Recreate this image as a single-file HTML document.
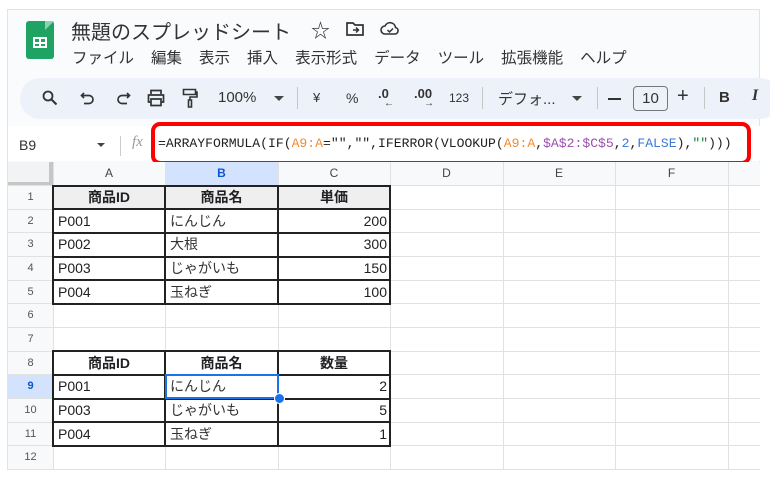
<!DOCTYPE html><html><head><meta charset="utf-8"><style>
body{margin:0;width:770px;height:482px;background:#fff;position:relative;overflow:hidden;font-family:"Liberation Sans","Noto Sans CJK JP",sans-serif;color:#202124}
.a{position:absolute}
.app{left:7px;top:9px;width:753px;height:461px;background:#f9fbfd;border:1px solid #e3e3e3;box-sizing:border-box;overflow:hidden}
.cell{position:absolute;font-size:14px;line-height:23px;white-space:nowrap;overflow:hidden}
.mono{font-family:"Liberation Mono","DejaVu Sans Mono",monospace}
.menu span{margin-right:17px}
</style></head><body>
<div class="a app"></div>
<div class="a" style="left:26px;top:21px;width:28px;height:38px;background:#1ea362;border-radius:3px"></div>
<div class="a" style="left:45px;top:21px;width:0;height:0;border-left:9px solid #8ed1b1;border-bottom:9px solid transparent"></div>
<div class="a" style="left:33px;top:37px;width:14px;height:11px;border:2px solid #fff;box-sizing:border-box"></div>
<div class="a" style="left:33px;top:41.5px;width:14px;height:2px;background:#fff"></div>
<div class="a" style="left:39px;top:37px;width:2px;height:11px;background:#fff"></div>
<div class="a" style="left:71px;top:16px;font-size:20px;color:#333">無題のスプレッドシート</div>
<div class="a" style="left:311px;top:16px;font-size:19px;color:#333">☆</div>
<svg class="a" style="left:346px;top:21px" width="18" height="15" viewBox="0 0 18 15"><path d="M1 2h6l2 2h8v10H1z" fill="none" stroke="#333" stroke-width="1.7"/><path d="M7 9h5M10 6.5l2.5 2.5-2.5 2.5" fill="none" stroke="#333" stroke-width="1.5"/></svg>
<svg class="a" style="left:380px;top:21px" width="20" height="15" viewBox="0 0 20 15"><path d="M5 13a4 4 0 0 1 0-8 5.5 5.5 0 0 1 10.5 1.5A3.3 3.3 0 0 1 15 13z" fill="none" stroke="#333" stroke-width="1.6"/><path d="M7.5 9l2 2 3.5-3.5" fill="none" stroke="#333" stroke-width="1.5"/></svg>
<div class="a menu" style="left:72px;top:46px;font-size:15.5px;color:#333;white-space:nowrap"><span>ファイル</span><span>編集</span><span>表示</span><span>挿入</span><span>表示形式</span><span>データ</span><span>ツール</span><span>拡張機能</span><span>ヘルプ</span></div>
<div class="a" style="left:20px;top:78px;width:760px;height:41px;background:#edf2fa;border-radius:20px"></div>
<svg class="a" style="left:42px;top:90px" width="16" height="16" viewBox="0 0 16 16"><circle cx="6" cy="6" r="4.5" fill="none" stroke="#333" stroke-width="1.8"/><path d="M9.5 9.5l5 5" stroke="#333" stroke-width="2"/></svg>
<svg class="a" style="left:80px;top:91px" width="16" height="15" viewBox="0 0 16 15"><path d="M4 2L1.5 4.5 4 7M2 4.5h7a4 4 0 0 1 0 8H4" fill="none" stroke="#333" stroke-width="1.7"/></svg>
<svg class="a" style="left:115px;top:91px" width="16" height="15" viewBox="0 0 16 15"><path d="M12 2l2.5 2.5L12 7M14 4.5H7a4 4 0 0 0 0 8h5" fill="none" stroke="#333" stroke-width="1.7"/></svg>
<svg class="a" style="left:147px;top:89px" width="18" height="18" viewBox="0 0 18 18"><path d="M4 5V1.5h10V5M4 13H1.5V6h15v7H14M4 10h10v6.5H4z" fill="none" stroke="#333" stroke-width="1.7"/></svg>
<svg class="a" style="left:182px;top:88px" width="16" height="20" viewBox="0 0 16 20"><path d="M1.5 1.5h12v5h-12zM13.5 4h1.5v5H8v3M6.5 12h3v7h-3z" fill="none" stroke="#333" stroke-width="1.6"/></svg>
<div class="a" style="left:218px;top:89px;font-size:15px;color:#333">100%</div>
<div class="a" style="left:274px;top:96px;border:5px solid transparent;border-top-color:#444"></div>
<div class="a" style="left:297px;top:87px;width:1px;height:22px;background:#c7c7c7"></div>
<div class="a" style="left:313px;top:90px;font-size:13px;color:#333">¥</div>
<div class="a" style="left:346px;top:90px;font-size:14px;color:#333">%</div>
<div class="a" style="left:378px;top:86px;font-size:13px;color:#333;font-weight:bold">.0</div>
<div class="a" style="left:384px;top:98px;font-size:10px;color:#333">←</div>
<div class="a" style="left:414px;top:86px;font-size:13px;color:#333;font-weight:bold">.00</div>
<div class="a" style="left:424px;top:98px;font-size:10px;color:#333">→</div>
<div class="a" style="left:449px;top:91px;font-size:12px;color:#333">123</div>
<div class="a" style="left:482px;top:87px;width:1px;height:22px;background:#c7c7c7"></div>
<div class="a" style="left:498px;top:88px;font-size:15px;color:#333">デフォ...</div>
<div class="a" style="left:572px;top:96px;border:5px solid transparent;border-top-color:#444"></div>
<div class="a" style="left:597px;top:87px;width:1px;height:22px;background:#c7c7c7"></div>
<div class="a" style="left:608px;top:98px;width:13px;height:2px;background:#333"></div>
<div class="a" style="left:633px;top:86px;width:35px;height:25px;border:1px solid #777;border-radius:4px;box-sizing:border-box;font-size:15px;text-align:center;line-height:23px;color:#333">10</div>
<div class="a" style="left:677px;top:85px;font-size:20px;color:#333">+</div>
<div class="a" style="left:704px;top:87px;width:1px;height:22px;background:#c7c7c7"></div>
<div class="a" style="left:719px;top:89px;font-size:15px;font-weight:bold;color:#333">B</div>
<div class="a" style="left:752px;top:87px;font-size:16px;font-style:italic;font-weight:bold;color:#333;font-family:'Liberation Serif',serif">I</div>
<div class="a" style="left:8px;top:126px;width:752px;height:35px;background:#fff"></div>
<div class="a" style="left:19px;top:137px;font-size:14px;color:#333">B9</div>
<div class="a" style="left:97px;top:143px;border:4.5px solid transparent;border-top-color:#444"></div>
<div class="a" style="left:120px;top:136px;width:1px;height:20px;background:#ccc"></div>
<div class="a" style="left:132px;top:134px;font-size:15px;font-style:italic;color:#999;font-family:'Liberation Serif',serif">fx</div>
<div class="a" style="left:151px;top:122px;width:600px;height:43px;border:4px solid #ff0000;border-radius:9px;box-sizing:border-box"></div>
<div class="a mono" style="left:158px;top:136px;font-size:13.1px;color:#202124;white-space:nowrap;letter-spacing:0">=ARRAYFORMULA(IF(<span style="color:#f28b30">A9:A</span>="","",IFERROR(VLOOKUP(<span style="color:#f28b30">A9:A</span>,<span style="color:#9a4fb0">$A$2:$C$5</span>,<span style="color:#3a77d8">2</span>,<span style="color:#3a77d8">FALSE</span>),<span style="color:#188038">""</span>)))</div>
<div class="a" id="g" style="left:8px;top:162px;width:752px;height:308px;background:#fff;overflow:hidden"></div>
<script>
var g=document.getElementById('g');
var cols=[0,45,157,270,382,495,607,720,760];
var rt=function(r){return 24+(r-1)*23.67};
var h='';
h+='<div class="a" style="left:0;top:0;width:752px;height:24px;background:#f8f9fa"></div>';
h+='<div class="a" style="left:0;top:0;width:45px;height:308px;background:#f8f9fa"></div>';
h+='<div class="a" style="left:157px;top:0;width:113px;height:24px;background:#d3e3fd"></div>';
h+='<div class="a" style="left:0;top:'+rt(9)+'px;width:45px;height:23.67px;background:#d3e3fd"></div>';
h+='<div class="a" style="left:0;top:0;width:45px;height:24px;background:#f1f3f4;border-right:4px solid #c4c7c5;border-bottom:4px solid #c4c7c5;box-sizing:border-box"></div>';
for(var i=1;i<cols.length-1;i++)h+='<div class="a" style="left:'+cols[i]+'px;top:0;width:1px;height:308px;background:#e1e1e1"></div>';
for(var r=1;r<=13;r++)h+='<div class="a" style="left:0;top:'+(rt(r)-1)+'px;width:752px;height:1px;background:#e1e1e1"></div>';
var L=['A','B','C','D','E','F'];
for(var i=0;i<6;i++)h+='<div class="cell" style="left:'+cols[i+1]+'px;top:0;width:'+(cols[i+2]-cols[i+1])+'px;text-align:center;font-size:12px;color:#444;'+(i==1?'font-weight:bold;color:#0b57d0':'')+'">'+L[i]+'</div>';
for(var r=1;r<=12;r++)h+='<div class="cell" style="left:0;top:'+rt(r)+'px;width:45px;text-align:center;font-size:11px;color:#555;'+(r==9?'font-weight:bold;color:#0b57d0':'')+'">'+r+'</div>';
function tbl(r0,hd,rows){
 h+='<div class="a" style="left:45px;top:'+(rt(r0)-1)+'px;width:226px;height:23.67px;background:'+(r0==1?'#efefef':'#fff')+'"></div>';
 h+='<div class="a" style="left:270px;top:'+(rt(r0)-1)+'px;width:113px;height:23.67px;background:'+(r0==1?'#efefef':'#fff')+'"></div>';
 for(var c=0;c<3;c++)h+='<div class="cell" style="left:'+cols[c+1]+'px;top:'+rt(r0)+'px;width:'+(cols[c+2]-cols[c+1])+'px;text-align:center;font-weight:bold">'+hd[c]+'</div>';
 rows.forEach(function(rw,k){var r=r0+1+k;
  h+='<div class="cell" style="left:50px;top:'+rt(r)+'px">'+rw[0]+'</div>';
  h+='<div class="cell" style="left:162px;top:'+rt(r)+'px;color:#333">'+rw[1]+'</div>';
  h+='<div class="cell" style="left:275px;top:'+rt(r)+'px;width:104px;text-align:right">'+rw[2]+'</div>';});
 var n=rows.length+1,top=rt(r0)-1,ht=n*23.67;
 for(var c=1;c<=4;c++)h+='<div class="a" style="left:'+(cols[c]-1)+'px;top:'+top+'px;width:2px;height:'+ht+'px;background:#222"></div>';
 for(var k=0;k<=n;k++)h+='<div class="a" style="left:44px;top:'+(top+k*23.67-0.5)+'px;width:339px;height:2px;background:#222"></div>';
}
tbl(1,['商品ID','商品名','単価'],[['P001','にんじん','200'],['P002','大根','300'],['P003','じゃがいも','150'],['P004','玉ねぎ','100']]);
tbl(8,['商品ID','商品名','数量'],[['P001','にんじん','2'],['P003','じゃがいも','5'],['P004','玉ねぎ','1']]);
h+='<div class="a" style="left:157px;top:'+(rt(9)-1)+'px;width:114px;height:24.5px;border:2px solid #1a73e8;box-sizing:border-box"></div>';
h+='<div class="a" style="left:266px;top:'+(rt(10)-6)+'px;width:9px;height:9px;border-radius:50%;background:#1a73e8;border:1px solid #fff"></div>';
g.innerHTML=h;
</script>
</body></html>
